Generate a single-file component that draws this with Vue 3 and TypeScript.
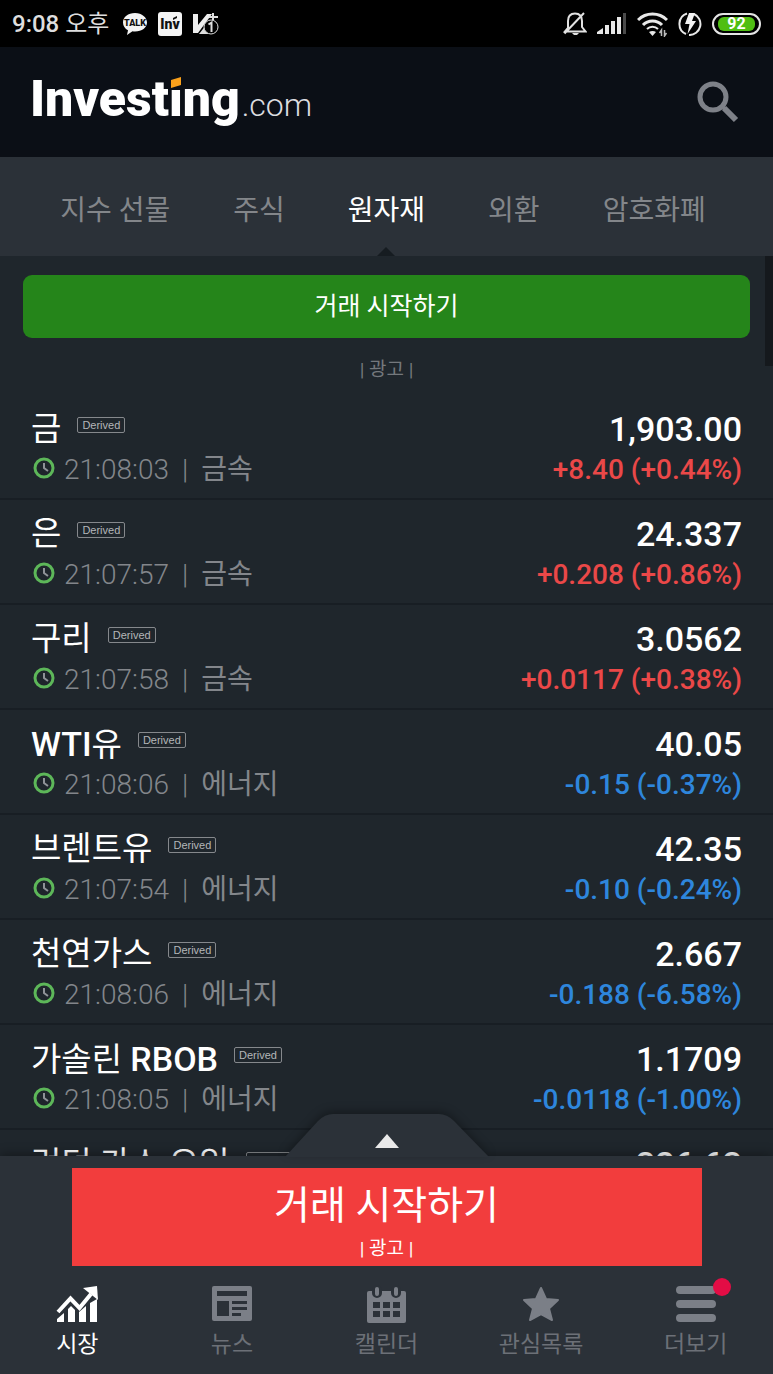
<script setup lang="ts">
import { ref } from 'vue'

interface Quote {
  name: string
  time: string
  category: string
  price: string
  change: string
  up: boolean
}

const tabs: string[] = ['지수 선물', '주식', '원자재', '외환', '암호화폐']
const activeTab = ref<number>(2)

const quotes: Quote[] = [
  { name: '금', time: '21:08:03', category: '금속', price: '1,903.00', change: '+8.40 (+0.44%)', up: true },
  { name: '은', time: '21:07:57', category: '금속', price: '24.337', change: '+0.208 (+0.86%)', up: true },
  { name: '구리', time: '21:07:58', category: '금속', price: '3.0562', change: '+0.0117 (+0.38%)', up: true },
  { name: 'WTI유', time: '21:08:06', category: '에너지', price: '40.05', change: '-0.15 (-0.37%)', up: false },
  { name: '브렌트유', time: '21:07:54', category: '에너지', price: '42.35', change: '-0.10 (-0.24%)', up: false },
  { name: '천연가스', time: '21:08:06', category: '에너지', price: '2.667', change: '-0.188 (-6.58%)', up: false },
  { name: '가솔린 RBOB', time: '21:08:05', category: '에너지', price: '1.1709', change: '-0.0118 (-1.00%)', up: false },
  { name: '런던 가스 오일', time: '21:08:04', category: '에너지', price: '326.63', change: '-1.37 (-0.42%)', up: false },
]

const navItems: { id: string; label: string }[] = [
  { id: 'market', label: '시장' },
  { id: 'news', label: '뉴스' },
  { id: 'calendar', label: '캘린더' },
  { id: 'watchlist', label: '관심목록' },
  { id: 'more', label: '더보기' },
]
const activeNav = ref<string>('market')

// Latin runs are set heavier than the Hangul around them.
function nameParts(name: string): { text: string; latin: boolean }[] {
  return name
    .split(/([A-Za-z]+)/)
    .filter((text) => text.length > 0)
    .map((text) => ({ text, latin: /^[A-Za-z]/.test(text) }))
}
</script>

<template>
  <div class="screen">
    <div class="status">
      <div class="status-group">
        <span class="clock-text">9:08 <span class="meridiem">오후</span></span>
        <svg width="26" height="24" viewBox="0 0 26 24">
          <path d="M13 1C6 1 1 5 1 10.500c0 3.500 2 6.200 5 7.800L5 23l5.500-3.700c.8.1 1.600.2 2.500.2 7 0 12-4 12-9S20 1 13 1z" fill="#f4f4f4" />
          <text x="13" y="14" text-anchor="middle" class="talk">TALK</text>
        </svg>
        <svg width="24" height="24" viewBox="0 0 24 24">
          <rect x="0" y="0" width="24" height="24" rx="3" fill="#f4f4f4" />
          <text x="12" y="17" text-anchor="middle" class="inv">Inv</text>
          <path d="M15 6l4-2v2l-4 2z" fill="#111" />
        </svg>
        <svg width="28" height="24" viewBox="0 0 28 24">
          <path d="M1 2h5v11L15 2h5L6 21H1z" fill="#eee" />
          <path d="M21 1v8M17 5h9M9 21l4-5 2 5z" stroke="#ddd" stroke-width="2" fill="#ddd" />
          <circle cx="19" cy="15" r="7" fill="#000" stroke="#ddd" stroke-width="1" />
          <path d="M16.500 12.500l3-2V20" fill="none" stroke="#ddd" stroke-width="2" />
        </svg>
      </div>
      <div class="status-group">
        <svg width="24" height="24" viewBox="0 0 24 24" fill="none" stroke="#e2e2e2" stroke-width="2">
          <path d="M5 16V9c0-5 3-7.500 7-7.500S19 4 19 9v6l3.500 4.500H2L5 16M1.500 21.500L21 1" />
          <path d="M9 21h7l-2 2h-3z" fill="#e2e2e2" stroke="none" />
        </svg>
        <svg width="30" height="24" viewBox="0 0 30 24" fill="#e8e8e8">
          <path d="M0 22v-2l6-4v6zM8 13h4v9H8zM14 9h4v13h-4zM20 5h4v17h-4z" />
          <path d="M26 1h3v21h-3z" fill="#4a4a4a" />
        </svg>
        <svg width="31" height="26" viewBox="0 0 31 26">
          <path d="M1 9C9 1 22 1 30 9M6 14c5-5.500 14-5.500 19 0" fill="none" stroke="#e8e8e8" stroke-width="3" />
          <path d="M10 18c3-3 8-3 11 0" fill="none" stroke="#e8e8e8" stroke-width="2" />
          <path d="M15.500 25l-3.500-4c2-1.500 5-1.500 7 0z" fill="#e8e8e8" />
          <path d="M24.500 25v-6l-2 3M27.500 19v6l2-3" stroke="#bbb" stroke-width="1.500" fill="none" />
        </svg>
        <svg width="24" height="24" viewBox="0 0 24 24">
          <path d="M9 1.500a11 11 0 0 0-1 20.500M16 2a11 11 0 0 1-5 21" fill="none" stroke="#e8e8e8" stroke-width="2" />
          <path d="M11 1h6l-3 8h4L9.500 22l2-10H7z" fill="#f2f2f2" />
        </svg>
        <span class="battery"><span class="level">92</span></span>
      </div>
    </div>

    <header class="header">
      <a class="logo" href="#" aria-label="Investing.com">
        <span class="brand">Invest<span class="brand-i">i<svg class="dot" width="14" height="14" viewBox="0 0 14 14"><path d="M1 0h12v14H1z" fill="#0b0f16" /><path d="M2 4l10-3v8L2 12z" fill="#f9a01b" /></svg></span>ng</span><span class="domain">.com</span>
      </a>
      <button class="search" type="button" aria-label="검색">
        <svg width="42" height="42" viewBox="0 0 42 42">
          <circle cx="16" cy="16" r="13" fill="none" stroke="#7e8188" stroke-width="5" />
          <path d="M25 24l3 4" stroke="#7e8188" stroke-width="3" />
          <path d="M27 27l12 12" stroke="#7e8188" stroke-width="6" />
        </svg>
      </button>
    </header>

    <nav class="tabs">
      <button
        v-for="(tab, i) in tabs"
        :key="tab"
        type="button"
        class="tab"
        :class="{ active: i === activeTab }"
        @click="activeTab = i"
      >{{ tab }}</button>
    </nav>

    <main class="content">
      <span class="thumb"></span>
      <section class="promo">
        <button class="trade" type="button">거래 시작하기</button>
        <span class="ad-note">| 광고 |</span>
      </section>
      <ul class="list">
        <li v-for="q in quotes" :key="q.name" class="row">
          <div class="left">
            <div class="title">
              <span class="name"><span v-for="p in nameParts(q.name)" :key="p.text" :class="{ latin: p.latin }">{{ p.text }}</span></span>
              <span class="badge">Derived</span>
            </div>
            <div class="meta">
              <svg class="clock" width="22" height="22" viewBox="0 0 22 22" fill="none">
                <circle cx="11" cy="11" r="9" stroke="#5db759" stroke-width="3" />
                <path d="M11 6v5l4 3" stroke="#8f9398" stroke-width="2" />
              </svg>
              <span class="time">{{ q.time }}</span>
              <span class="sep">|</span>
              <span>{{ q.category }}</span>
            </div>
          </div>
          <div class="right">
            <span class="price">{{ q.price }}</span>
            <span class="change" :class="q.up ? 'up' : 'down'">{{ q.change }}</span>
          </div>
        </li>
      </ul>
    </main>

    <footer class="bottom">
      <button class="handle" type="button" aria-label="펼치기">
        <svg width="204" height="43" viewBox="0 0 204 43">
          <path d="M0 43L33 7Q40 0 48 0H154Q162 0 169 7L204 43z" fill="#2b3138" />
          <path d="M102 20l12 14H90z" fill="#e9e9e9" />
        </svg>
      </button>
      <a class="banner" href="#">
        <span class="banner-title">거래 시작하기</span>
        <span class="banner-note">| 광고 |</span>
      </a>
      <nav class="nav">
        <button
          v-for="n in navItems"
          :key="n.id"
          type="button"
          class="nav-item"
          :class="{ active: n.id === activeNav }"
          @click="activeNav = n.id"
        >
          <svg v-if="n.id === 'market'" width="42" height="38" viewBox="0 0 42 38" fill="currentColor">
            <path d="M1 37v-3l7-6v9zM12 37V24l3-3 4 4v12zM23 37V27l7-6v16zM34 37V18l7-4v23z" />
            <path d="M2 27L14.500 13.500l9 9.500L35 9" fill="none" stroke="currentColor" stroke-width="4" />
            <path d="M27 3l14-2 1 14z" />
          </svg>
          <svg v-else-if="n.id === 'news'" width="42" height="38" viewBox="0 0 42 38">
            <rect x="1" y="1" width="40" height="35" rx="2" fill="currentColor" />
            <path d="M6 6h30v5H6zM6 16h12v15H6zM21 16h15v3H21zM21 22h15v3H21zM21 28h9v3h-9z" fill="#2b3138" />
          </svg>
          <svg v-else-if="n.id === 'calendar'" width="42" height="38" viewBox="0 0 42 38">
            <rect x="2" y="6" width="39" height="32" rx="2" fill="currentColor" />
            <g stroke="#2b3138" stroke-width="10" stroke-linecap="round"><path d="M12 5v3M31 5v3" /></g>
            <g stroke="currentColor" stroke-width="4" stroke-linecap="round"><path d="M12 4v5M31 4v5" /></g>
            <path d="M8 17h7v6H8zM18 17h7v6h-7zM28 17h7v6h-7zM8 26h7v6H8zM18 26h7v6h-7zM28 26h7v6h-7z" fill="#2b3138" />
          </svg>
          <svg v-else-if="n.id === 'watchlist'" width="42" height="38" viewBox="0 0 42 38">
            <path d="M21 3l5 11 12 1-9 8.500 3 11.500-11-6-11 6 3-11.500L4 15l12-1z" fill="currentColor" stroke="currentColor" stroke-width="2" stroke-linejoin="round" />
          </svg>
          <svg v-else width="42" height="38" viewBox="0 0 42 38" stroke="currentColor" stroke-width="8" stroke-linecap="round">
            <path d="M5 5h32M5 19h32M5 33h32" />
          </svg>
          <span v-if="n.id === 'more'" class="notice"></span>
          <span class="nav-label">{{ n.label }}</span>
        </button>
      </nav>
    </footer>
  </div>
</template>

<style>
html,
body {
  margin: 0;
  background: #1f262c;
}
</style>

<style scoped>
.screen {
  display: flex;
  flex-direction: column;
  height: 100vh;
  overflow: hidden;
  background: #1f262c;
  color: #fff;
  font-family: Roboto, "Noto Sans CJK KR", sans-serif;
}
button {
  margin: 0;
  padding: 0;
  border: 0;
  background: none;
  color: inherit;
  font: inherit;
  cursor: pointer;
}
a {
  color: inherit;
  text-decoration: none;
}
svg {
  display: block;
  flex: none;
}
.status {
  display: flex;
  align-items: center;
  justify-content: space-between;
  flex: none;
  height: 47px;
  padding: 0 12px;
  background: #000;
}
.status-group {
  display: flex;
  align-items: center;
  gap: 10px;
}
.clock-text {
  padding-right: 3px;
  font-size: 24px;
  font-weight: 500;
  line-height: 32px;
  color: #dedede;
}
.meridiem {
  font-weight: 400;
}
.talk {
  font: 900 9px Roboto, sans-serif;
  fill: #111;
}
.inv {
  font: 900 14px Roboto, sans-serif;
  fill: #111;
}
.battery {
  display: flex;
  box-sizing: border-box;
  width: 49px;
  height: 22px;
  padding: 2px 4px;
  border: 2px solid #e4e4e4;
  border-radius: 11px;
}
.level {
  flex: 1;
  border-radius: 6px;
  background: #4fbe12;
  font-size: 16px;
  font-weight: 700;
  line-height: 14px;
  text-align: center;
}
.header {
  display: flex;
  align-items: center;
  justify-content: space-between;
  flex: none;
  height: 110px;
  padding: 0 34px 0 30px;
  background: #0b0f16;
}
.logo {
  display: flex;
  align-items: baseline;
  gap: 2px;
  line-height: 60px;
}
.brand {
  font-size: 50px;
  font-weight: 900;
}
.brand-i {
  position: relative;
}
.dot {
  position: absolute;
  left: 0;
  top: 6px;
}
.domain {
  font-size: 32px;
  font-weight: 300;
  color: #dcdde0;
}
.tabs {
  display: flex;
  justify-content: center;
  flex: none;
  gap: 63px;
  height: 99px;
  padding-right: 7px;
  background: #2b3138;
}
.tab {
  position: relative;
  padding-top: 2px;
  font-size: 28px;
  color: #83868a;
  white-space: nowrap;
}
.tab.active {
  color: #fff;
}
.tab.active::after {
  content: "";
  position: absolute;
  left: 50%;
  bottom: 0;
  margin-left: -9px;
  border: 9px solid transparent;
  border-top: 0;
  border-bottom-color: #161c21;
}
.content {
  position: relative;
  flex: 1;
  min-height: 0;
  overflow: hidden;
}
.thumb {
  position: absolute;
  top: 0;
  right: 0;
  width: 8px;
  height: 110px;
  background: #15191d;
}
.promo {
  display: flex;
  flex-direction: column;
  padding: 19px 23px 10px;
}
.trade {
  height: 63px;
  padding-bottom: 5px;
  border-radius: 9px;
  background: #25851a;
  font-size: 25px;
}
.ad-note {
  padding-top: 17px;
  font-size: 19px;
  line-height: 30px;
  text-align: center;
  color: #74787d;
}
.list {
  margin: 0;
  padding: 0;
  list-style: none;
}
.row {
  display: flex;
  justify-content: space-between;
  box-sizing: border-box;
  height: 105px;
  padding: 14px 31px 0;
  border-bottom: 2px solid #181e24;
}
.left,
.right {
  display: flex;
  flex-direction: column;
  gap: 1px;
}
.right {
  align-items: flex-end;
  font-weight: 500;
}
.title {
  display: flex;
  align-items: center;
  gap: 16px;
  height: 40px;
}
.name {
  font-size: 33px;
  line-height: 42px;
  white-space: pre;
}
.latin {
  font-size: 34px;
  font-weight: 500;
}
.badge {
  box-sizing: border-box;
  height: 16px;
  margin-bottom: 8px;
  padding: 0 4px;
  border: 1px solid #85888c;
  border-radius: 2px;
  font-family: "Liberation Sans", sans-serif;
  font-size: 11px;
  line-height: 14px;
  color: #b4b6b9;
}
.meta {
  display: flex;
  align-items: center;
  height: 40px;
  padding-left: 2px;
  font-size: 28px;
  line-height: 40px;
  color: #83868b;
}
.clock {
  margin-bottom: 4px;
}
.time {
  padding-left: 9px;
  font-weight: 300;
}
.sep {
  padding: 0 13px;
  font-weight: 300;
}
.price {
  font-size: 34px;
  line-height: 40px;
}
.change {
  font-size: 28px;
  line-height: 40px;
}
.up {
  color: #ea4848;
}
.down {
  color: #2e86dc;
}
.bottom {
  position: relative;
  display: flex;
  flex-direction: column;
  align-items: center;
  flex: none;
  height: 218px;
  background: #2b3138;
  box-shadow: 0 -2px 10px rgba(0, 0, 0, 0.35);
}
.handle {
  position: absolute;
  left: 50%;
  bottom: 100%;
  margin: 0 0 -1px -102px;
  filter: drop-shadow(0 -3px 4px rgba(0, 0, 0, 0.3));
}
.banner {
  display: flex;
  flex-direction: column;
  align-items: center;
  box-sizing: border-box;
  width: 630px;
  max-width: 100%;
  height: 98px;
  margin-top: 12px;
  padding-top: 10px;
  background: #f23d3d;
}
.banner-title {
  font-size: 39px;
  line-height: 56px;
}
.banner-note {
  font-size: 19px;
  line-height: 30px;
}
.nav {
  display: grid;
  grid-template-columns: repeat(5, 1fr);
  width: 100%;
}
.nav-item {
  position: relative;
  display: flex;
  flex-direction: column;
  align-items: center;
  gap: 6px;
  padding-top: 19px;
  color: #7b7f87;
}
.nav-label {
  font-size: 23px;
  line-height: 32px;
  color: #6c7077;
}
.nav-item.active,
.nav-item.active .nav-label {
  color: #fff;
}
.notice {
  position: absolute;
  left: 50%;
  top: 12px;
  width: 18px;
  height: 18px;
  margin-left: 17px;
  border-radius: 50%;
  background: #e30d45;
}
</style>
